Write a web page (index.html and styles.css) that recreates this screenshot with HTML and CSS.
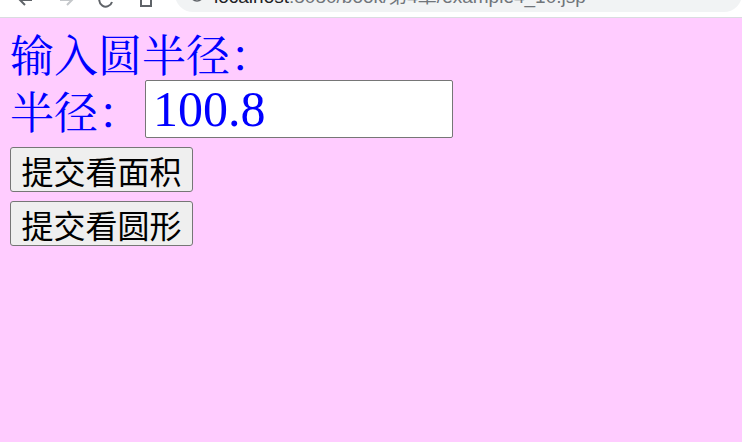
FILE: index.html
```html
<!DOCTYPE html>
<html>
<head>
<meta charset="utf-8">
<link rel="stylesheet" href="styles.css">
</head>
<body>
<div class="chrome">
  <div class="nav">
    <svg class="ic" width="20" height="20" viewBox="0 0 20 20"><path d="M16 10H4M9 5l-5 5 5 5" fill="none" stroke="#5f6368" stroke-width="2"/></svg>
    <svg class="ic" width="20" height="20" viewBox="0 0 20 20"><path d="M4 10h12M11 5l5 5-5 5" fill="none" stroke="#c4c7ca" stroke-width="2"/></svg>
    <svg class="ic" width="20" height="20" viewBox="0 0 20 20"><path d="M15.5 7A6.5 6.5 0 1 0 16 12" fill="none" stroke="#5f6368" stroke-width="2"/></svg>
    <svg class="ic" width="20" height="20" viewBox="0 0 20 20"><rect x="5" y="4" width="10" height="12" fill="none" stroke="#5f6368" stroke-width="2"/></svg>
  </div>
  <div class="omni">
    <svg class="lock" width="16" height="16" viewBox="0 0 16 16"><circle cx="8" cy="8" r="6" fill="none" stroke="#5f6368" stroke-width="1.6"/></svg>
    <span class="url"><span class="host">localhost</span>:8080/book/第4章/example4_10.jsp</span>
  </div>
</div>
<div class="page">
  <form class="form">
    <div class="title">输入圆半径：</div>
    <div class="row"><span class="label">半径：</span><input class="field" type="text" value="100.8"></div>
    <div class="btnrow"><button class="btn" type="button">提交看面积</button></div>
    <div class="btnrow"><button class="btn" type="button">提交看圆形</button></div>
  </form>
</div>
</body>
</html>
```
FILE: styles.css
```css
html, body {
  margin: 0;
  padding: 0;
  height: 100%;
}
body {
  display: flex;
  flex-direction: column;
  background: #ffccff;
}
.chrome {
  height: 17px;
  background: #ffffff;
  border-bottom: 1px solid #dadce0;
  display: flex;
  overflow: hidden;
  flex: none;
}
.nav {
  display: flex;
  align-items: flex-end;
  gap: 20px;
  padding-left: 16px;
  width: 175px;
  box-sizing: border-box;
  margin-top: -11px;
  height: 21px;
}
.ic { flex: none; }
.omni {
  flex: 1;
  background: #f1f3f4;
  height: 36px;
  margin-top: -24px;
  border-radius: 18px;
  display: flex;
  align-items: center;
  padding-left: 14px;
  gap: 9px;
  font-family: "Liberation Sans", "Noto Sans CJK SC", sans-serif;
  font-size: 19px;
  color: #70757a;
}
.lock { margin-top: 2px; }
.host { color: #202124; }
.page {
  flex: 1;
  background: #ffccff;
}
.form {
  margin: 0;
  padding: 8px 10px;
  font-family: "Noto Serif CJK SC", "Liberation Serif", "Noto Sans CJK SC", serif;
  color: #0000ff;
}
.title {
  font-size: 44px;
  line-height: 54px;
  height: 54px;
}
.row {
  display: flex;
  align-items: center;
  height: 58px;
  font-size: 44px;
  line-height: 54px;
}
.label { margin-top: 2px; }
.field {
  width: 308px;
  height: 58px;
  box-sizing: border-box;
  border: 1px solid #767676;
  border-radius: 2px;
  padding: 0 7px;
  font-family: "Liberation Serif", serif;
  font-size: 50px;
  color: #0000ff;
  background: #ffffff;
  margin: 0 0 0 3px;
}
.btnrow {
  margin-top: 9px;
  height: 45px;
}
.btnrow + .btnrow { margin-top: 9px; }
.btn {
  width: 183px;
  height: 45px;
  box-sizing: border-box;
  border: 1px solid #767676;
  border-radius: 3px;
  background: #efefef;
  font-family: "Noto Sans CJK SC", sans-serif;
  font-size: 32px;
  color: #000000;
  padding: 0 4px;
  line-height: 1;
}
```
